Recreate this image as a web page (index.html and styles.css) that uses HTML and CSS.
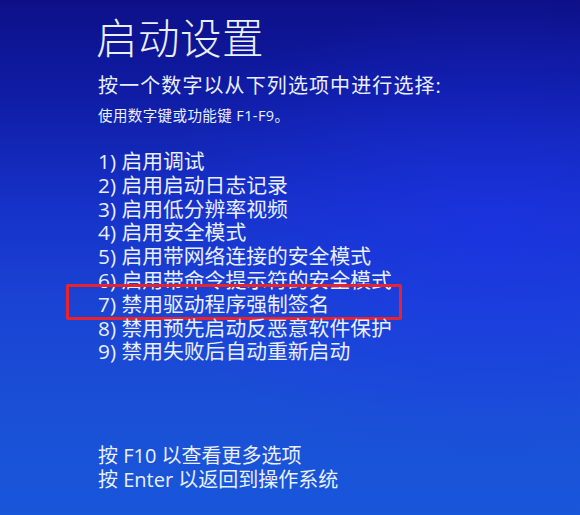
FILE: index.html
```html
<!DOCTYPE html>
<html lang="zh-CN">
<head>
<meta charset="utf-8">
<title>启动设置</title>
<link rel="stylesheet" href="styles.css">
</head>
<body>
<main class="screen">
  <h1 class="title">启动设置</h1>
  <p class="prompt">按一个数字以从下列选项中进行选择:</p>
  <p class="hint">使用数字键或功能键 F1-F9。</p>
  <ol class="options">
    <li>1) 启用调试</li>
    <li>2) 启用启动日志记录</li>
    <li>3) 启用低分辨率视频</li>
    <li>4) 启用安全模式</li>
    <li>5) 启用带网络连接的安全模式</li>
    <li>6) 启用带命令提示符的安全模式</li>
    <li class="marked">7) 禁用驱动程序强制签名</li>
    <li>8) 禁用预先启动反恶意软件保护</li>
    <li>9) 禁用失败后自动重新启动</li>
  </ol>
  <div class="footer">
    <p>按 F10 以查看更多选项</p>
    <p>按 Enter 以返回到操作系统</p>
  </div>
</main>
</body>
</html>
```

FILE: styles.css
```css
html, body {
  margin: 0;
  padding: 0;
}

body {
  width: 580px;
  height: 515px;
  overflow: hidden;
  background:
    radial-gradient(ellipse 60% 45% at 85% 45%, rgba(30, 50, 240, 0.5), rgba(30, 50, 240, 0) 100%),
    linear-gradient(180deg, #0d1088 0%, #0f1ca4 18%, #1632c8 40%, #1a44d4 60%, #1a50d6 80%, #1856da 100%);
  color: #eaeffe;
  font-family: "Open Sans", "Noto Sans CJK SC", sans-serif;
}

.screen {
  display: flex;
  flex-direction: column;
  padding: 14px 0 0 98px;
}

.title {
  margin: 0 0 0 -2px;
  font-size: 41.5px;
  line-height: 48px;
  font-weight: 300;
  letter-spacing: 0.5px;
}

.prompt {
  margin: 12px 0 0;
  font-size: 20px;
  line-height: 24px;
  font-weight: 400;
  letter-spacing: 1.1px;
}

.hint {
  margin: 9px 0 0;
  font-size: 14.5px;
  line-height: 18px;
  letter-spacing: 0.4px;
}

.options {
  list-style: none;
  margin: 25px 0 0;
  padding: 0;
  font-size: 20.8px;
  line-height: 23.8px;
}

.options li {
  position: relative;
  white-space: nowrap;
}

.marked::after {
  content: "";
  position: absolute;
  left: -32px;
  top: -9px;
  width: 330px;
  height: 30px;
  border: 3px solid #e8232e;
  border-radius: 2px;
}

.footer {
  margin-top: 80px;
  font-size: 20px;
  line-height: 24px;
}

.footer p {
  margin: 0;
}
```
